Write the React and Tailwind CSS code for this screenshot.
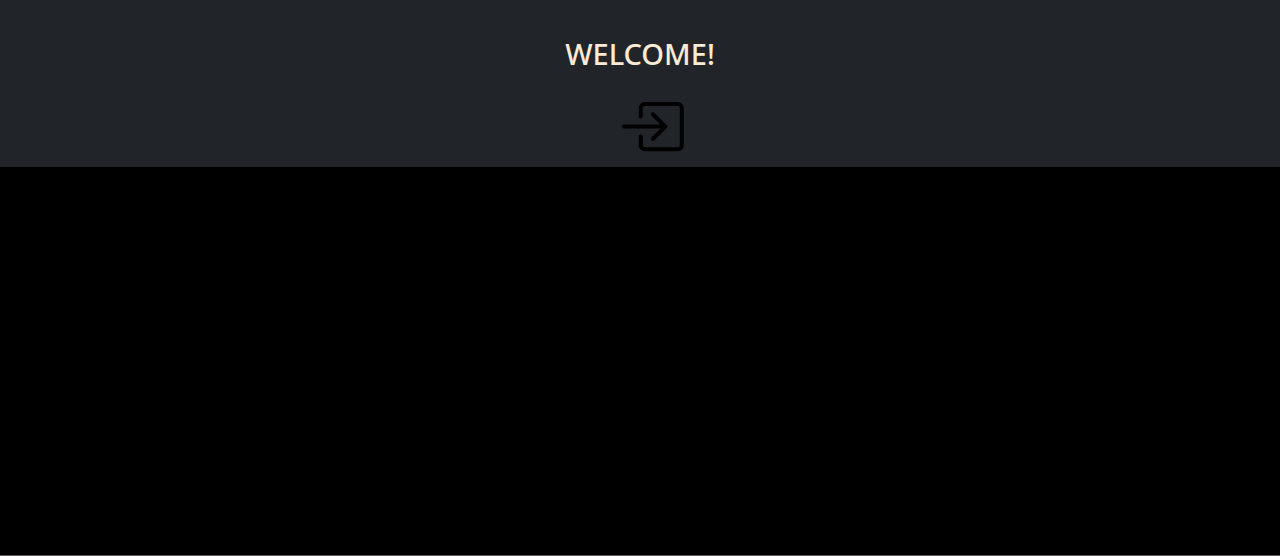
function EnterIcon() {
  return (
    <svg
      className="h-[52px] w-16"
      viewBox="0 0 64 52"
      fill="none"
      stroke="currentColor"
      strokeWidth="4"
      strokeLinecap="round"
      strokeLinejoin="round"
      aria-hidden="true"
    >
      <path d="M19.8 16.6V8a4 4 0 0 1 4-4H56.8a4 4 0 0 1 4 4V45.2a4 4 0 0 1-4 4H23.8a4 4 0 0 1-4-4V36.6" />
      <path d="M3 26.6H44.4M31.8 14.2L44.4 26.6L31.8 39" />
    </svg>
  );
}

export default function App() {
  return (
    <div className="flex min-h-screen flex-col border-b border-[#5f5759] bg-black font-['Noto_Sans',sans-serif]">
      <header className="flex flex-col items-center bg-[#212529] pt-9 pb-[15px]">
        <h1 className="text-[29px] leading-9 font-medium text-[#faebd7]">WELCOME!</h1>
        <button type="button" aria-label="Enter" className="mt-7 cursor-pointer pl-[26px] text-black">
          <EnterIcon />
        </button>
      </header>
      <main className="grow" />
    </div>
  );
}
